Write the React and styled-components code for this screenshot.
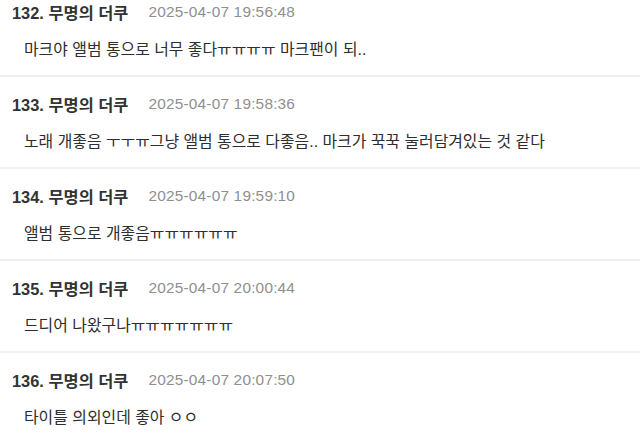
import React from "react";
import styled, { createGlobalStyle } from "styled-components";

const Global = createGlobalStyle`
  html, body { margin: 0; padding: 0; background: #ffffff; }
  body { font-family: "Liberation Sans", "Noto Sans CJK KR", sans-serif; overflow: hidden; }
`;

const List = styled.ul`
  list-style: none;
  margin: -15px 0 0;
  padding: 0;
  width: 640px;
`;

const Item = styled.li`
  box-sizing: border-box;
  height: 92px;
  padding: 16px 12px 0;
  border-bottom: 2px solid #efefef;
`;

const Header = styled.div`
  display: flex;
  align-items: center;
  gap: 20px;
  height: 22px;
`;

const Name = styled.span`
  font-size: 16.4px;
  font-weight: 700;
  color: #333333;
`;

const Date = styled.span`
  font-size: 15.4px;
  color: #8f8f8f;
  letter-spacing: 0.2px;
`;

const Body = styled.p`
  margin: 16px 0 0 12px;
  line-height: 22px;
  font-size: 15.9px;
  color: #2e2e2e;
`;

const comments = [
  { no: 132, date: "2025-04-07 19:56:48", text: "마크야 앨범 통으로 너무 좋다ㅠㅠㅠㅠ 마크팬이 되.." },
  { no: 133, date: "2025-04-07 19:58:36", text: "노래 개좋음 ㅜㅜㅠ그냥 앨범 통으로 다좋음.. 마크가 꾹꾹 눌러담겨있는 것 같다" },
  { no: 134, date: "2025-04-07 19:59:10", text: "앨범 통으로 개좋음ㅠㅠㅠㅠㅠㅠ" },
  { no: 135, date: "2025-04-07 20:00:44", text: "드디어 나왔구나ㅠㅠㅠㅠㅠㅠㅠ" },
  { no: 136, date: "2025-04-07 20:07:50", text: "타이틀 의외인데 좋아 ㅇㅇ" },
];

export default function App() {
  return (
    <>
      <Global />
      <List>
        {comments.map((c) => (
          <Item key={c.no}>
            <Header>
              <Name>{c.no}. 무명의 더쿠</Name>
              <Date>{c.date}</Date>
            </Header>
            <Body>{c.text}</Body>
          </Item>
        ))}
      </List>
    </>
  );
}
